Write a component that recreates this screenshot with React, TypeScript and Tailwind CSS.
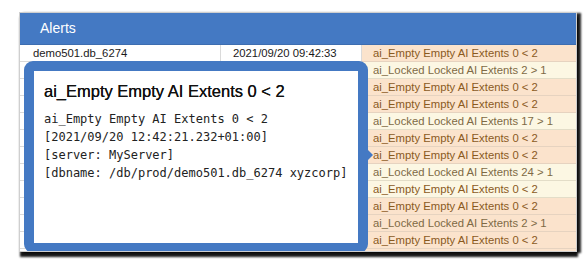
import React from "react";

type Row = { kind: "empty" | "locked"; text: string; bg: "o" | "y"; left?: string; date?: string };

const rows: Row[] = [
  { kind: "empty", text: "ai_Empty Empty AI Extents 0 < 2", bg: "o", left: "demo501.db_6274", date: "2021/09/20 09:42:33" },
  { kind: "locked", text: "ai_Locked Locked AI Extents 2 > 1", bg: "y" },
  { kind: "empty", text: "ai_Empty Empty AI Extents 0 < 2", bg: "o" },
  { kind: "empty", text: "ai_Empty Empty AI Extents 0 < 2", bg: "o" },
  { kind: "locked", text: "ai_Locked Locked AI Extents 17 > 1", bg: "y" },
  { kind: "empty", text: "ai_Empty Empty AI Extents 0 < 2", bg: "o" },
  { kind: "empty", text: "ai_Empty Empty AI Extents 0 < 2", bg: "o" },
  { kind: "locked", text: "ai_Locked Locked AI Extents 24 > 1", bg: "y" },
  { kind: "empty", text: "ai_Empty Empty AI Extents 0 < 2", bg: "y" },
  { kind: "empty", text: "ai_Empty Empty AI Extents 0 < 2", bg: "o" },
  { kind: "locked", text: "ai_Locked Locked AI Extents 2 > 1", bg: "o" },
  { kind: "empty", text: "ai_Empty Empty AI Extents 0 < 2", bg: "o" },
  { kind: "empty", text: "", bg: "o" },
];

export default function App() {
  return (
    <div className="w-[586px] h-[264px] bg-white overflow-hidden pl-[19px] pt-[12px]" style={{ fontFamily: '"Liberation Sans", Arial, sans-serif' }}>
      <div className="relative w-[558px] h-[240px] border border-[#cfcfcf] bg-white overflow-hidden shadow-[4px_1px_2px_rgba(0,0,0,0.85),1px_5px_2px_rgba(0,0,0,0.9)]">
        <div className="h-[32px] bg-[#4479c3] border-b border-[#3d6db0] flex items-center pl-[20px] text-white text-[14px]">
          Alerts
        </div>
        <div className="flex flex-col">
          {rows.map((r, i) => (
            <div key={i} className="flex h-[17px] shrink-0 text-[11.3px] leading-[16px]">
              <div className="w-[201px] shrink-0 border-r border-b border-[#dadada] pl-[13px] text-[#1a1a1a]">{r.left ?? ""}</div>
              <div className="w-[141px] shrink-0 border-r border-b border-[#dadada] pl-[12px] text-[#1a1a1a]">{r.date ?? ""}</div>
              <div
                className={
                  "flex-1 border-b pl-[11px] " +
                  (r.bg === "o" ? "bg-[#fbe3cc] border-[#e6d3c0] " : "bg-[#fcf7e3] border-[#e3ddc8] ") +
                  (r.kind === "empty" ? "text-[#8a5a1e]" : "text-[#7e6a45]")
                }
              >
                {r.text}
              </div>
            </div>
          ))}
        </div>
        <div className="absolute left-[4px] top-[48px] w-[344px] h-[192px] rounded-[9px] bg-[#4479c3] p-[10px]">
          <div className="w-full h-full bg-white pl-[10px] pt-[9px]">
            <div className="text-[16.5px] leading-[22px] text-[#111] [text-shadow:0_0_0.3px_#111]">ai_Empty Empty AI Extents 0 &lt; 2</div>
            <div className="mt-[8px] text-[12px] leading-[18px] text-[#222] whitespace-pre" style={{ fontFamily: '"DejaVu Sans Mono", monospace' }}>
              {"ai_Empty Empty AI Extents 0 < 2\n[2021/09/20 12:42:21.232+01:00]\n[server: MyServer]\n[dbname: /db/prod/demo501.db_6274 xyzcorp]"}
            </div>
          </div>
          <div className="absolute right-[-5px] top-[89px] w-0 h-0 border-t-[5px] border-b-[5px] border-l-[5px] border-t-transparent border-b-transparent border-l-[#4479c3]" />
        </div>
      </div>
    </div>
  );
}
